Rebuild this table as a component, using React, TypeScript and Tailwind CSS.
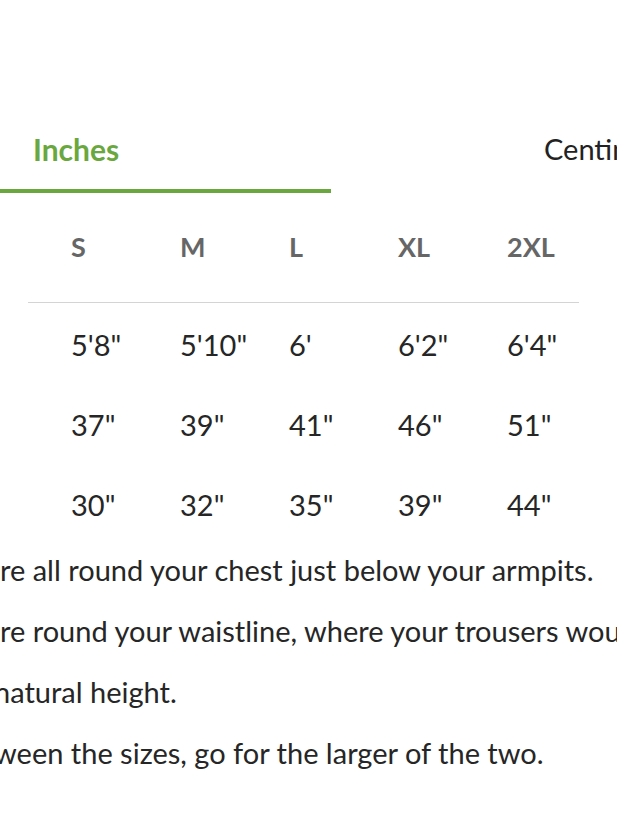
const sizes = ["S", "M", "L", "XL", "2XL"];

const rows = [
  { label: "Height", values: ["5'8\"", "5'10\"", "6'", "6'2\"", "6'4\""] },
  { label: "Chest", values: ["37\"", "39\"", "41\"", "46\"", "51\""] },
  { label: "Waist", values: ["30\"", "32\"", "35\"", "39\"", "44\""] },
];

const notes = [
  { hidden: "Chest: Measu", shown: "re all round your chest just below your armpits.", shift: "" },
  { hidden: "Waist: Measu", shown: "re round your waistline, where your trousers would normally sit.", shift: "" },
  { hidden: "Height: Your ", shown: "natural height.", shift: "-ml-[6px]" },
  { hidden: "If you're bet", shown: "ween the sizes, go for the larger of the two.", shift: "-ml-[6px]" },
];

export default function App() {
  return (
    <div className="w-[617px] h-[823px] overflow-hidden bg-white font-['Lato',sans-serif] text-[#262626]">
      {/* unit tabs */}
      <div className="pt-[128px] flex items-start">
        <div className="w-[331px] h-[65px] shrink-0 border-b-4 border-[#6aa83f] pl-[33px] pt-[3px] leading-[36px] text-[30px] font-bold text-[#6aa83f] cursor-pointer">
          Inches
        </div>
        <div className="ml-[213px] h-[65px] shrink-0 whitespace-nowrap pt-[3px] leading-[36px] text-[29px] text-[#222] cursor-pointer">
          Centimetres
        </div>
      </div>

      {/* size table */}
      <div className="grid grid-cols-[109px_109px_109px_109px_109px] h-[109px] items-center pl-[71px] text-[27px] font-bold text-[#666]">
        {sizes.map((s) => (
          <div key={s}>{s}</div>
        ))}
      </div>
      <div className="ml-[28px] w-[551px] h-px bg-[#d4d4d4]" />
      <div className="pt-[2px]">
        {rows.map((r) => (
          <div
            key={r.label}
            className="grid grid-cols-[109px_109px_109px_109px_109px] h-[80px] items-center pl-[71px] text-[29px]"
          >
            {r.values.map((v, i) => (
              <div key={i}>{v}</div>
            ))}
          </div>
        ))}
      </div>

      {/* measuring notes */}
      <div className="-mt-[6px] -ml-[400px] text-[29px] leading-[61px]">
        {notes.map((n) => (
          <p key={n.hidden} className="flex whitespace-nowrap">
            <span className="w-[400px] shrink-0 text-right">{n.hidden}</span>
            <span className={n.shift}>{n.shown}</span>
          </p>
        ))}
      </div>
    </div>
  );
}
